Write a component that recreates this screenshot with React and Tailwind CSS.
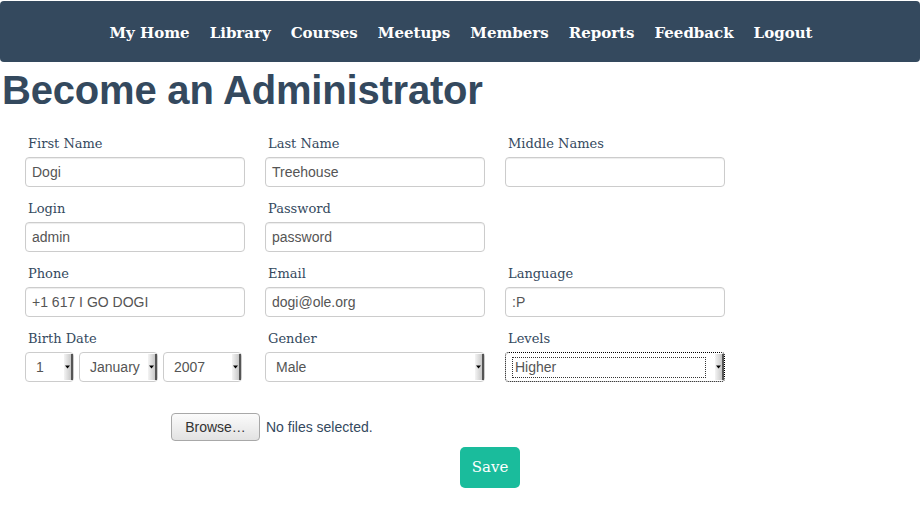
import React from "react";

function Field({ label, children }) {
  return (
    <div className="flex flex-col">
      <label className="h-5 leading-5 mt-px mb-[3px] pl-[3px] text-[13px] text-[#34495e] font-['DejaVu_Serif',serif]">{label}</label>
      {children}
    </div>
  );
}

function TextInput({ value }) {
  return (
    <div className="h-[30px] w-[220px] rounded-[4px] border border-[#cccccc] bg-white pl-[6px] flex items-center text-[14px] text-[#555555] font-['Liberation_Sans',sans-serif] shadow-[inset_0_1px_1px_rgba(0,0,0,0.075)]">
      {value}
    </div>
  );
}

function Arrow() {
  return (
    <div className="w-[9px] self-stretch my-[1px] bg-gradient-to-r from-[#f4f4f4] to-[#c8c8c8] border-r-2 border-[#555] flex items-center justify-center">
      <svg width="5" height="4" viewBox="0 0 5 4"><path d="M0 0.5h5L2.5 3.5z" fill="#000" /></svg>
    </div>
  );
}

function Select({ value, width, focused }) {
  return (
    <div
      className={
        "h-[30px] rounded-[4px] bg-white flex items-center text-[14px] text-[#555555] font-['Liberation_Sans',sans-serif] " +
        (focused ? "border border-dotted border-black" : "border border-[#cccccc]")
      }
      style={{ width }}
    >
      {focused ? (
        <div className="flex-1 ml-[6px] mr-[9px] h-[21px] border border-dotted border-[#333] flex items-center pl-[2px] text-[#555]">{value}</div>
      ) : (
        <div className="flex-1 pl-[10px]">{value}</div>
      )}
      <Arrow />
    </div>
  );
}

export default function App() {
  const nav = ["My Home", "Library", "Courses", "Meetups", "Members", "Reports", "Feedback", "Logout"];
  return (
    <div className="w-[921px] h-[511px] bg-white overflow-hidden">
      <nav className="mt-px w-[920px] h-[61px] bg-[#34495e] rounded-[4px] flex items-center justify-center gap-[20px] pl-[2px] pt-[3px]">
        {nav.map((n) => (
          <span key={n} className="text-white font-bold text-[15px] font-['DejaVu_Serif',serif]">{n}</span>
        ))}
      </nav>
      <h1 className="ml-[2px] mt-[4px] text-[40px] leading-[48px] font-bold text-[#34495e] font-['Liberation_Sans',sans-serif] tracking-[-0.2px]">
        Become an Administrator
      </h1>
      <div className="pl-[25px] mt-[19px]">
        <div className="grid grid-cols-[220px_220px_220px] gap-x-5 gap-y-[11px]">
          <Field label="First Name"><TextInput value="Dogi" /></Field>
          <Field label="Last Name"><TextInput value="Treehouse" /></Field>
          <Field label="Middle Names"><TextInput value="" /></Field>
          <Field label="Login"><TextInput value="admin" /></Field>
          <Field label="Password"><TextInput value="password" /></Field>
          <div />
          <Field label="Phone"><TextInput value="+1 617 I GO DOGI" /></Field>
          <Field label="Email"><TextInput value="dogi@ole.org" /></Field>
          <Field label="Language"><TextInput value=":P" /></Field>
          <Field label="Birth Date">
            <div className="flex gap-[5px]">
              <Select value="1" width={49} />
              <Select value="January" width={79} />
              <Select value="2007" width={79} />
            </div>
          </Field>
          <Field label="Gender"><Select value="Male" width={220} /></Field>
          <Field label="Levels"><Select value="Higher" width={220} focused /></Field>
        </div>
        <div className="mt-[31px] ml-[146px] flex items-center gap-[6px]">
          <button className="h-[28px] w-[89px] rounded-[4px] border border-[#a8a8a8] bg-gradient-to-b from-[#fbfbfb] to-[#e2e2e2] text-[14px] text-[#333] font-['Liberation_Sans',sans-serif]">
            Browse…
          </button>
          <span className="text-[14px] text-[#34495e] font-['Liberation_Sans',sans-serif]">No files selected.</span>
        </div>
        <div className="mt-[6px] ml-[435px]">
          <button className="h-[41px] w-[60px] rounded-[5px] bg-[#1abc9c] text-white text-[15px] font-['DejaVu_Serif',serif]">Save</button>
        </div>
      </div>
    </div>
  );
}
